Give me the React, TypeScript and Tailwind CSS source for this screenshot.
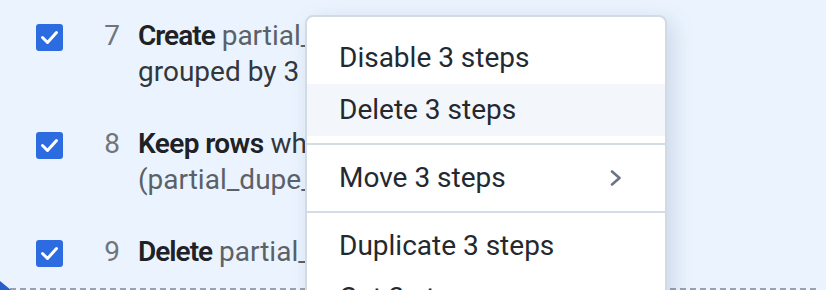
import React from "react";

const Checkbox = () => (
  <svg width="27" height="27" viewBox="0 0 27 27" className="mt-[6px] shrink-0">
    <rect x="0" y="0" width="27" height="27" rx="3" fill="#2d6be0" />
    <path
      d="M6.5 13.5 L11.5 18.5 L20.5 8.5"
      stroke="#ffffff"
      strokeWidth="3"
      fill="none"
      strokeLinecap="round"
      strokeLinejoin="round"
    />
  </svg>
);

const StepRow = ({ n, children }: { n: number; children: React.ReactNode }) => (
  <div className="flex items-start py-[18px] pl-[36px]">
    <Checkbox />
    <div className="w-[57px] shrink-0 text-right text-[#6f757b]">{n}</div>
    <div className="ml-[18px] w-[480px] text-[#33373c]">{children}</div>
  </div>
);

const MenuItem = ({
  label,
  active,
  chevron,
}: {
  label: string;
  active?: boolean;
  chevron?: boolean;
}) => (
  <div
    className={
      active
        ? "flex h-[52px] items-center justify-between bg-[#f3f7fc] pl-[32px] pr-[43px]"
        : "flex h-[52px] items-center justify-between pl-[32px] pr-[43px]"
    }
  >
    <span>{label}</span>
    {chevron && (
      <svg width="12" height="16" viewBox="0 0 12 16">
        <path
          d="M2 1.5 L9.5 8 L2 14.5"
          stroke="#6b7584"
          strokeWidth="2.6"
          fill="none"
          strokeLinecap="round"
          strokeLinejoin="round"
        />
      </svg>
    )}
  </div>
);

const Divider = () => <div className="my-[7px] h-[2px] bg-[#d3dbe4]" />;

export default function App() {
  return (
    <div className="relative h-[290px] w-[826px] overflow-hidden bg-[#ebf4fe] font-[Roboto,sans-serif] text-[28px] leading-[36px]">
      <div className="flex flex-col">
        <StepRow n={7}>
          <span className="font-semibold tracking-[-1px] text-[#202124]">Create</span>{" "}
          <span className="text-[#5b6168]">partial_dupe_count_grouped</span> grouped by 3 columns
        </StepRow>
        <StepRow n={8}>
          <span className="font-semibold tracking-[-0.6px] text-[#202124]">Keep rows</span> where{" "}
          <span className="text-[#5b6168]">(partial_dupe_count_grouped &gt; 1)</span>
        </StepRow>
        <StepRow n={9}>
          <span className="font-semibold tracking-[-1px] text-[#202124]">Delete</span>{" "}
          <span className="text-[#5b6168]">partial_dupe_count</span>
        </StepRow>
        <div className="ml-[10px] mr-[8px] h-[2px] bg-[repeating-linear-gradient(to_right,#9aa3ad_0_6px,transparent_6px_10px)]" />
      </div>

      <svg width="11" height="9" viewBox="0 0 11 9" className="absolute bottom-0 left-0">
        <polygon points="0,0 11,9 0,9" fill="#2a5fc9" />
      </svg>

      <div className="absolute left-[305px] top-[15px] w-[362px] rounded-[8px] border-2 border-[#d2dae4] bg-white pt-[15px] leading-normal text-[#24292f] shadow-[6px_6px_22px_rgba(40,70,120,0.16)]">
        <MenuItem label="Disable 3 steps" />
        <MenuItem label="Delete 3 steps" active />
        <Divider />
        <MenuItem label="Move 3 steps" chevron />
        <Divider />
        <MenuItem label="Duplicate 3 steps" />
        <MenuItem label="Cut 3 steps" />
        <MenuItem label="Copy 3 steps" />
      </div>
    </div>
  );
}
